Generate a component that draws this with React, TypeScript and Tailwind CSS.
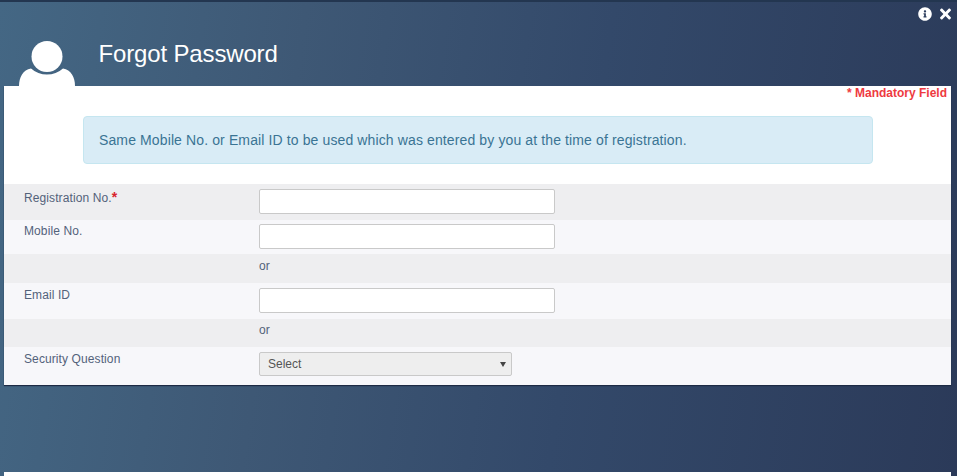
import { FaInfoCircle, FaTimes } from 'react-icons/fa';

function Row({ label, required, shade, className, labelClass, children }: any) {
  return (
    <div className={`flex pl-5 ${shade ? 'bg-[#eeeef0]' : 'bg-[#f7f7fa]'} ${className}`}>
      <div className={`w-[235px] shrink-0 text-xs leading-[17px] tracking-[0.1px] text-[#53627a] ${labelClass}`}>
        {label}
        {required && <span className="text-sm font-bold leading-none text-[#d9232e]">*</span>}
      </div>
      <div>{children}</div>
    </div>
  );
}

function TextBox({ className }: any) {
  return <input className={`block h-[25px] w-[296px] rounded-[2px] border border-[#c9c9c9] bg-white ${className}`} />;
}

function Or({ className }: any) {
  return <div className={`text-xs leading-[17px] text-[#53627a] ${className}`}>or</div>;
}

export default function App() {
  return (
    <div className="flex h-[476px] w-[957px] flex-col overflow-hidden border-t-2 border-[#233650] bg-[linear-gradient(98deg,#446784_0%,#3e5875_30%,#33496a_60%,#2b3a59_100%)] font-['Liberation_Sans',Arial,sans-serif]">
      <div className="relative flex h-[84px] shrink-0 items-start">
        <svg className="ml-[19px] mt-[39px] h-[45px] w-[56px]" viewBox="0 0 56 45" fill="#fff">
          <circle cx="28" cy="15.5" r="15.5" />
          <path d="M0 45C0 36 4 29 12 27.5A24 24 0 0 0 44 27.5C52 29 56 36 56 45Z" />
        </svg>
        <h1 className="ml-[23.5px] mt-[38px] text-2xl leading-7 tracking-[-0.15px] text-white">Forgot Password</h1>
        <div className="absolute right-[6px] top-[4px] flex items-center gap-2 text-white">
          <FaInfoCircle className="h-[14px] w-[14px]" />
          <FaTimes className="h-4 w-[11px]" />
        </div>
      </div>

      <div className="mx-[4px] h-[299px] w-[947px] shrink-0 bg-white shadow-[0_1px_1px_#1d2a44]">
        <div className="pr-[4px] pt-[1px] text-right text-xs font-bold leading-[13px] text-[#ee3a3f]">* Mandatory Field</div>
        <div className="mx-[79px] mt-4 flex h-12 w-[790px] items-center rounded border border-[#c5e6f0] bg-[#d9ecf6] px-[15px] text-sm tracking-[0.12px] text-[#3a7494]">
          Same Mobile No. or Email ID to be used which was entered by you at the time of registration.
        </div>
        <div className="mt-5">
          <Row label="Registration No." required shade className="h-9" labelClass="pt-[6px]">
            <TextBox className="mt-[5px]" />
          </Row>
          <Row label="Mobile No." className="h-[34px]" labelClass="pt-[3px]">
            <TextBox className="mt-[4px]" />
          </Row>
          <Row shade className="h-[29px]">
            <Or className="pt-[4px]" />
          </Row>
          <Row label="Email ID" className="h-9" labelClass="pt-[4px]">
            <TextBox className="mt-[5px]" />
          </Row>
          <Row shade className="h-7">
            <Or className="pt-[3px]" />
          </Row>
          <Row label="Security Question" className="h-[38px]" labelClass="pt-[4px]">
            <div className="mt-[5px] flex h-6 w-[253px] items-center justify-between rounded-[2px] border border-[#c9c9c9] bg-[#eeeeee] pl-2 pr-[5px] text-xs text-[#555]">
              <span>Select</span>
              <svg className="h-[5px] w-[6px]" viewBox="0 0 6 5" fill="#444">
                <path d="M0 0H6L3 5Z" />
              </svg>
            </div>
          </Row>
        </div>
      </div>

      <div className="mx-[4px] mt-[87px] h-[10px] w-[947px] shrink-0 bg-white" />
    </div>
  );
}
